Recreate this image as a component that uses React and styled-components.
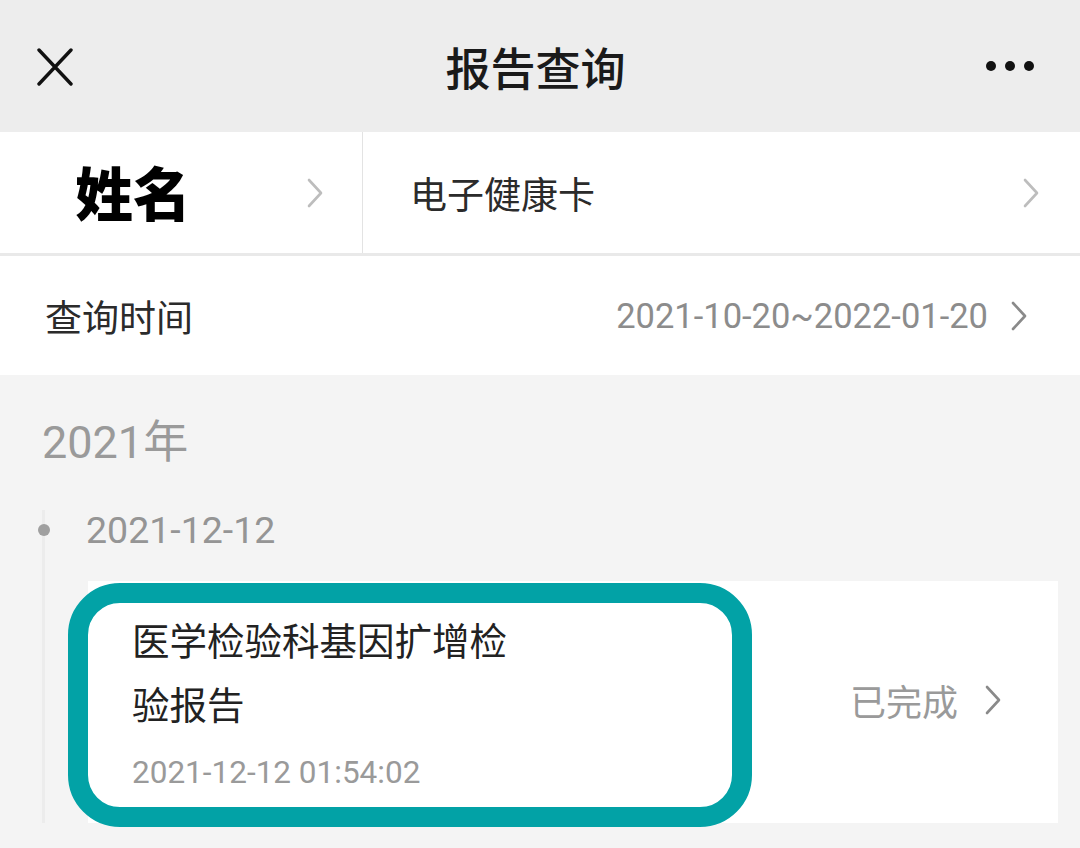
import React from 'react';
import styled, { createGlobalStyle } from 'styled-components';

const GlobalStyle = createGlobalStyle`
  html, body {
    margin: 0;
    padding: 0;
    background: #f4f4f4;
  }
  body {
    font-family: Roboto, "Noto Sans CJK SC", sans-serif;
  }
`;

const cjk = `"Noto Sans CJK SC", sans-serif`;
const num = `Roboto, "Noto Sans CJK SC", sans-serif`;

function Chevron({ color = '#b3b3b3', w = 18, h = 30 }) {
    return (
        <svg width={w} height={h} viewBox="0 0 18 30" fill="none">
            <path d="M3 2 L15 15 L3 28" stroke={color} strokeWidth="2.6" strokeLinecap="round" strokeLinejoin="round" />
        </svg>
    );
}

function App() {
    return (
        <Page>
            <GlobalStyle />
            <Header>
                <IconBox>
                    <svg width="36" height="38" viewBox="0 0 36 38">
                        <path d="M2 2 L34 36 M34 2 L2 36" stroke="#111" strokeWidth="3.4" strokeLinecap="round" />
                    </svg>
                </IconBox>
                <Title>报告查询</Title>
                <IconBox right>
                    <svg width="48" height="12" viewBox="0 0 48 12">
                        <circle cx="5" cy="6" r="5" fill="#111" />
                        <circle cx="24" cy="6" r="5" fill="#111" />
                        <circle cx="43" cy="6" r="5" fill="#111" />
                    </svg>
                </IconBox>
            </Header>

            <CardRow>
                <NameCell>
                    <Name>姓名</Name>
                    <Chevron color="#bdbdbd" />
                </NameCell>
                <HealthCell>
                    <RowLabel>电子健康卡</RowLabel>
                    <Chevron color="#bdbdbd" />
                </HealthCell>
            </CardRow>

            <TimeRow>
                <RowLabel>查询时间</RowLabel>
                <RangeWrap>
                    <Range>2021-10-20~2022-01-20</Range>
                    <Chevron color="#8a8a8a" />
                </RangeWrap>
            </TimeRow>

            <Section>
                <Year>2021年</Year>
                <Timeline>
                    <DateLine>
                        <Dot />
                        <DateText>2021-12-12</DateText>
                    </DateLine>
                    <Report>
                        <ReportInfo>
                            <ReportName>医学检验科基因扩增检验报告</ReportName>
                            <ReportTime>2021-12-12 01:54:02</ReportTime>
                        </ReportInfo>
                        <Status>
                            <span>已完成</span>
                            <Chevron color="#8a8a8a" />
                        </Status>
                        <Highlight />
                    </Report>
                </Timeline>
            </Section>
        </Page>
    );
}

export default App;

const Page = styled.div`
width: 1080px;
height: 848px;
overflow: hidden;
background: #f4f4f4;
`;

const Header = styled.div`
height: 132px;
background: #ededed;
display: flex;
align-items: center;
justify-content: space-between;
padding: 0 46px 0 37px;
box-sizing: border-box;
`;

const IconBox = styled.div`
width: 60px;
display: flex;
justify-content: ${p => (p.right ? 'flex-end' : 'flex-start')};
align-items: center;
margin-top: ${p => (p.right ? '0' : '2px')};
`;

const Title = styled.div`
font-family: ${cjk};
font-size: 45px;
font-weight: 500;
color: #1a1a1a;
`;

const CardRow = styled.div`
height: 121px;
background: #fff;
display: flex;
border-bottom: 3px solid #e9e9e9;
`;

const NameCell = styled.div`
width: 363px;
border-right: 1px solid #e3e3e3;
display: flex;
align-items: center;
justify-content: space-between;
padding: 0 38px 0 75px;
box-sizing: border-box;
`;

const Name = styled.div`
font-family: ${cjk};
font-size: 58px;
font-weight: 900;
color: #000;
margin-top: -4px;
`;

const HealthCell = styled.div`
flex: 1;
display: flex;
align-items: center;
justify-content: space-between;
padding: 0 40px 0 47px;
`;

const RowLabel = styled.div`
font-family: ${cjk};
font-size: 37px;
color: #2b2b2b;
`;

const TimeRow = styled.div`
height: 119px;
background: #fff;
display: flex;
align-items: center;
justify-content: space-between;
padding: 0 52px 0 45px;
`;

const RangeWrap = styled.div`
display: flex;
align-items: center;
gap: 22px;
`;

const Range = styled.div`
font-family: ${num};
font-size: 34.5px;
color: #8c8c8c;
`;

const Section = styled.div`
padding: 40px 0 0 0;
`;

const Year = styled.div`
font-family: ${num};
font-size: 45px;
color: #9a9a9a;
padding-left: 42px;
line-height: 56px;
`;

const Timeline = styled.div`
margin-top: 39px;
margin-left: 42px;
border-left: 3px solid #ececec;
`;

const DateLine = styled.div`
display: flex;
align-items: center;
height: 40px;
`;

const Dot = styled.div`
width: 12px;
height: 12px;
border-radius: 50%;
background: #a0a0a0;
margin-left: -7px;
`;

const DateText = styled.div`
font-family: ${num};
font-size: 37.5px;
color: #959595;
margin-left: 36px;
`;

const Report = styled.div`
position: relative;
margin: 31px 22px 0 43px;
background: #fff;
display: flex;
align-items: center;
justify-content: space-between;
padding: 26px 56px 30px 44px;
`;

const ReportInfo = styled.div`
width: 390px;
`;

const ReportName = styled.div`
font-family: ${cjk};
font-size: 37.5px;
line-height: 64px;
color: #222;
`;

const ReportTime = styled.div`
font-family: ${num};
font-size: 31.5px;
line-height: 40px;
color: #9a9a9a;
margin-top: 18px;
`;

const Status = styled.div`
display: flex;
align-items: center;
gap: 26px;
font-family: ${cjk};
font-size: 36px;
color: #9a9a9a;
`;

const Highlight = styled.div`
position: absolute;
left: -20px;
top: 2px;
width: 684px;
height: 244px;
box-sizing: border-box;
border: 20px solid #02a2a6;
border-radius: 52px;
pointer-events: none;
`;
